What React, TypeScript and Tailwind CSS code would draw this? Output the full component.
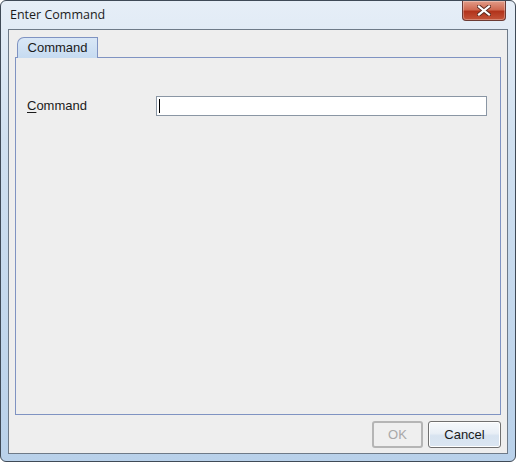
import React from "react";

const CloseButton = () => (
    <div className="absolute right-[9px] top-0 w-[44px] h-[20px] rounded-b-[4px] border border-t-0 border-[#6b3a34] bg-[linear-gradient(#e29c88_0%,#d06a52_45%,#b2341c_55%,#c4543a_100%)] flex items-center justify-center shadow-[inset_0_0_0_1px_rgba(255,255,255,0.3)]">
        <svg width="14" height="11" viewBox="0 0 14 11">
            <path
                d="M2 1.5 L12 9.5 M12 1.5 L2 9.5"
                stroke="#5a2a20"
                strokeWidth="4"
                strokeLinecap="square"
            />
            <path
                d="M2 1.5 L12 9.5 M12 1.5 L2 9.5"
                stroke="#ffffff"
                strokeWidth="2.2"
                strokeLinecap="square"
            />
        </svg>
    </div>
);

const DialogButton = ({
    label,
    disabled,
    className,
}: {
    label: string;
    disabled?: boolean;
    className?: string;
}) => (
    <button
        className={
            "h-[27px] rounded-[3px] text-[13px] " +
            (disabled
                ? "border-2 border-[#b5b5b5] bg-[#efefef] text-[#a8a8a8] "
                : "border border-[#707070] bg-[linear-gradient(#f6f9fc_0%,#e9eff6_45%,#d7e3f0_55%,#dbe6f2_100%)] text-[#1a1a1a] shadow-[inset_0_0_0_1px_#ffffff] ") +
            (className ?? "")
        }
    >
        {label}
    </button>
);

export default function App() {
    return (
        <div className="w-[516px] h-[462px] bg-white font-['Liberation_Sans',Arial,sans-serif]">
            <div className="relative w-full h-full rounded-[6px] border border-[#3f4a57] bg-[linear-gradient(#e6eef7_0%,#d0e0f0_30%,#b9d1ea_100%)] flex flex-col px-[7px] pb-[7px]">
                <div className="h-[28px] shrink-0 flex items-center pl-[2px] pt-[1px] text-[12.5px] text-[#1b1b1b] font-['Open_Sans','Liberation_Sans',sans-serif]">
                    Enter Command
                </div>
                <CloseButton />
                <div className="flex-1 border border-[#6e7a88] bg-[#eeeeee] flex flex-col px-[6px] pt-[7px] pb-[5px]">
                    <div className="flex">
                        <div className="relative ml-[2px] w-[81px] h-[21px] -mb-px z-10 border border-b-0 border-[#7f93c2] rounded-tl-[7px] bg-[linear-gradient(#d9e7f6,#c6dbf1)] text-[13px] text-[#1b1b1b] flex items-center justify-center">
                            Command
                        </div>
                    </div>
                    <div className="flex-1 border border-[#7f93c2] bg-[#eeeeee] px-[11px] pt-[38px]">
                        <div className="flex items-center">
                            <span className="w-[129px] text-[13px] text-[#1b1b1b]">
                                <span className="underline underline-offset-2">C</span>
                                ommand
                            </span>
                            <div className="w-[331px] h-[20px] border border-[#8a96a4] bg-white flex items-center pl-[2px]">
                                <div className="w-px h-[14px] bg-black" />
                            </div>
                        </div>
                    </div>
                    <div className="flex justify-end gap-[5px] pt-[6px]">
                        <DialogButton label="OK" disabled className="w-[51px]" />
                        <DialogButton label="Cancel" className="w-[73px]" />
                    </div>
                </div>
            </div>
        </div>
    );
}
